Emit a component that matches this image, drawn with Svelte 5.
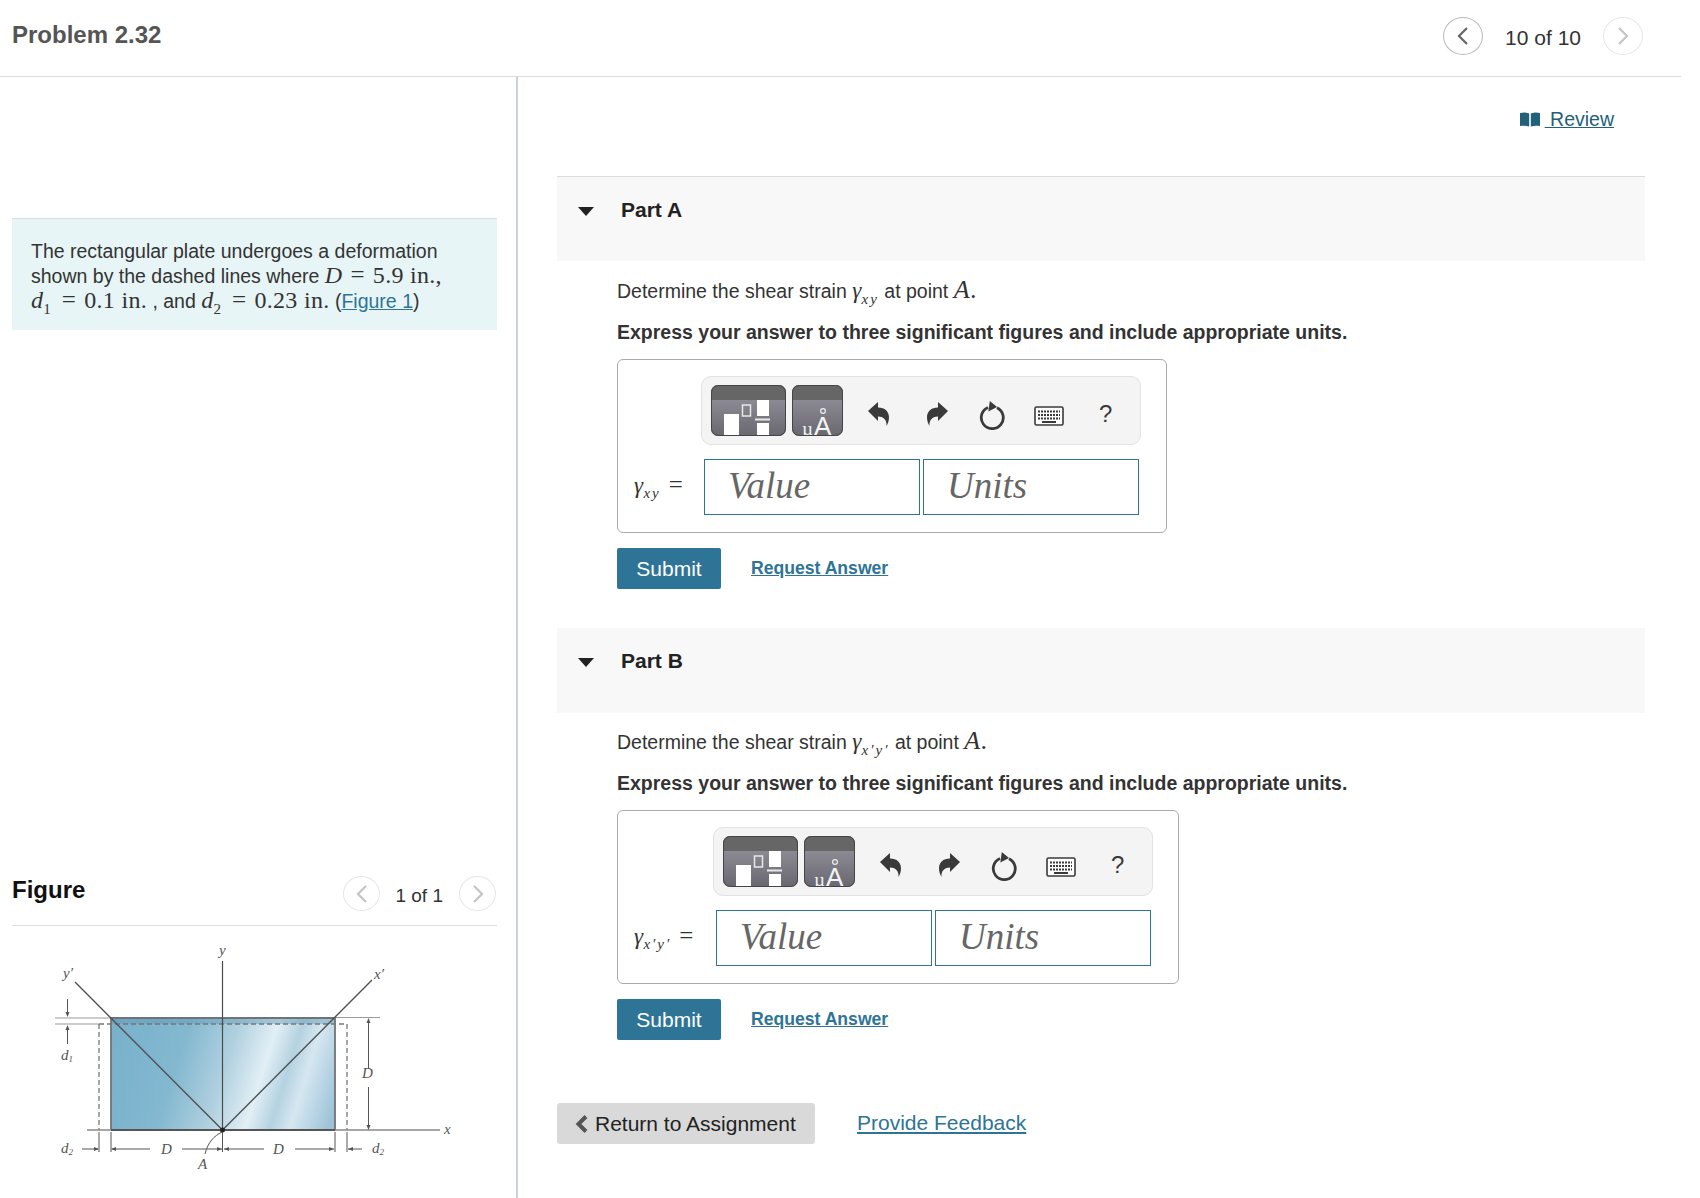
<script lang="ts">
	const parts = [
		{ name: 'Part A', sub: 'xy', cls: 'part-a' },
		{ name: 'Part B', sub: 'x′y′', cls: 'part-b' }
	];
</script>

{#snippet chevron(dir: string, cls: string)}
	<button class="circle {cls}" type="button" aria-label={dir}>
		<svg width="14" height="22" viewBox="0 0 14 22" fill="none">
			<path d={dir === 'prev' ? 'M11 3 3 11l8 8' : 'M3 3l8 8-8 8'} stroke="currentColor" stroke-width="2.2" />
		</svg>
	</button>
{/snippet}

{#snippet toolbar()}
	<div class="toolbar">
		<svg class="tpl" width="75" height="51" viewBox="0 0 75 51">
			<defs>
				<linearGradient id="tplbg" x1="0" y1="0" x2="0" y2="1">
					<stop offset="0" stop-color="#9a99a3" />
					<stop offset="1" stop-color="#696870" />
				</linearGradient>
				<clipPath id="tplclip"><rect width="75" height="51" rx="7" /></clipPath>
			</defs>
			<g clip-path="url(#tplclip)">
				<rect width="75" height="51" fill="url(#tplbg)" />
				<rect width="75" height="15" fill="#666" />
				<rect x="13" y="29" width="15" height="22" fill="#fff" />
				<rect x="31.5" y="20" width="8" height="11" fill="none" stroke="#e8e8e8" stroke-width="1.5" />
				<rect x="46" y="15" width="12" height="16" fill="#fff" />
				<rect x="44" y="33.5" width="15" height="2" fill="#e8e8e8" />
				<rect x="46" y="38" width="12" height="13" fill="#fff" />
			</g>
			<rect x=".5" y=".5" width="74" height="50" rx="7" fill="none" stroke="#444" />
		</svg>
		<svg class="tpl units-btn" width="51" height="51" viewBox="0 0 51 51">
			<defs>
				<clipPath id="uclip"><rect width="51" height="51" rx="7" /></clipPath>
			</defs>
			<g clip-path="url(#uclip)">
				<rect width="51" height="51" fill="url(#tplbg)" />
				<rect width="51" height="15" fill="#666" />
				<circle cx="31" cy="26" r="2.4" fill="none" stroke="#eee" stroke-width="1.2" />
			</g>
			<text x="10" y="50" class="unit-glyph small">µ</text>
			<text x="22" y="50" class="unit-glyph">A</text>
			<rect x=".5" y=".5" width="50" height="50" rx="7" fill="none" stroke="#444" />
		</svg>
		<svg class="tool undo" width="24" height="26" viewBox="0 0 24 26">
			<path d="M1 10 11 1v5.500c7 0 11 4 11 10 0 3-1 6-2.500 8.500 .5-5-2-9.500-8.500-9.500V20Z" fill="#3a3a3a" />
		</svg>
		<svg class="tool redo" width="24" height="26" viewBox="0 0 24 26">
			<path d="M23 10 13 1v5.500c-7 0-11 4-11 10 0 3 1 6 2.500 8.500-.5-5 2-9.500 8.500-9.500V20Z" fill="#3a3a3a" />
		</svg>
		<svg class="tool reset" width="28" height="30" viewBox="0 0 28 30" fill="none">
			<path d="M9 7.500a11 11 0 1 0 9 .2" stroke="#3a3a3a" stroke-width="2.800" />
			<path d="M10 1.500 18 6.500 10 12Z" fill="#3a3a3a" transform="rotate(8 14 7)" />
		</svg>
		<svg class="tool keys" width="30" height="20" viewBox="0 0 30 20">
			<rect x="1" y="1" width="28" height="18" rx="1.500" fill="#fff" stroke="#3a3a3a" stroke-width="1.600" />
			<path d="M4 5.500h22M4 9h22" stroke="#3a3a3a" stroke-width="2" stroke-dasharray="2 1" />
			<path d="M4 12.500h22" stroke="#3a3a3a" stroke-width="2" stroke-dasharray="2 1" />
			<path d="M8 16h14" stroke="#3a3a3a" stroke-width="2" />
		</svg>
		<span class="help">?</span>
	</div>
{/snippet}

<div class="page">
	<header class="top">
		<h1>Problem 2.32</h1>
		<nav class="pager">
			{@render chevron('prev', 'on')}
			<span class="count">10 of 10</span>
			{@render chevron('next', 'off')}
		</nav>
	</header>

	<div class="columns">
		<aside class="left">
			<div class="intro">
				The rectangular plate undergoes a deformation<br />
				shown by the dashed lines where <span class="m"><i>D</i><span class="eq">=</span>5.9 in.,</span><br />
				<span class="m"><i>d</i><sub>1</sub><span class="eq">=</span>0.1 in.</span> , and <span class="m"><i>d</i><sub>2</sub><span class="eq">=</span>0.23 in.</span>
				(<a href="#fig">Figure 1</a>)
			</div>

			<div class="fig-head">
				<h2>Figure</h2>
				<div class="fig-pager">
					{@render chevron('prev', 'off small')}
					<span>1 of 1</span>
					{@render chevron('next', 'off small')}
				</div>
			</div>

			<svg class="figure" width="486" height="265" viewBox="12 933 486 265">
				<defs>
					<linearGradient id="plate" gradientUnits="userSpaceOnUse" x1="111" y1="1040" x2="335" y2="1110">
						<stop offset="0" stop-color="#79b1cb" />
						<stop offset=".3" stop-color="#83b8d0" />
						<stop offset=".5" stop-color="#b0d0df" />
						<stop offset=".66" stop-color="#e2eff5" />
						<stop offset=".76" stop-color="#b4d2e1" />
						<stop offset=".84" stop-color="#d6e7f0" />
						<stop offset="1" stop-color="#9cc3d8" />
					</linearGradient>
				</defs>
				<rect x="111" y="1019" width="224" height="112" fill="url(#plate)" />
				<rect x="111" y="1019" width="224" height="6" fill="#5f9ab8" opacity=".45" />
				<g fill="none" stroke="#6f7478">
					<path d="M111 1019h224M111 1019v112M335 1019v112" stroke-width="1.800" />
					<path d="M55 1019h56M335 1018.500h45M55 1025h44" stroke="#9a9a9a" stroke-width="1.200" />
					<path d="M99 1025h248v106M99 1025v106" stroke="#777" stroke-width="1.300" stroke-dasharray="5 3" />
				</g>
				<path d="M87 1131h353" stroke="#888" stroke-width="1.300" />
				<path d="M111 1131h224" stroke="#555" stroke-width="2" />
				<path d="M222.500 962v169" stroke="#4a4a4a" stroke-width="1.200" />
				<path d="M75 983 222.500 1131 372 981" fill="none" stroke="#4f5254" stroke-width="1.400" />
				<circle cx="222.500" cy="1131" r="2.500" fill="#222" />
				<g stroke="#555" stroke-width="1" fill="none">
					<path d="M67.500 1000v17M67.500 1027v18" />
					<path d="M368.500 1020v50M368.500 1088v42" />
					<path d="M99 1133v20M111 1133v20M222.500 1133v20M335 1133v20M347 1133v20" />
					<path d="M82 1150h16M112 1150h38M182 1150h40M224 1150h40M295 1150h39M348 1150h14" />
					<path d="M222 1133c-8 4-14 10-17 22" />
				</g>
				<g fill="#555">
					<path d="M67.500 1018l-2-5h4ZM67.500 1026l-2 5h4ZM368.500 1019l-2 5h4ZM368.500 1131l-2-5h4Z" />
					<path d="M99 1150l-5-2v4ZM111 1150l5-2v4ZM222 1150l-5-2v4ZM224 1150l5-2v4ZM334 1150l-5-2v4ZM348 1150l5-2v4Z" />
				</g>
				<g class="fig-label">
					<text x="219" y="956">y</text>
					<text x="63" y="979">y′</text>
					<text x="374" y="980">x′</text>
					<text x="61" y="1061">d<tspan class="tiny" dy="2">1</tspan></text>
					<text x="362" y="1079">D</text>
					<text x="444" y="1135">x</text>
					<text x="61" y="1154">d<tspan class="tiny" dy="2">2</tspan></text>
					<text x="161" y="1155">D</text>
					<text x="273" y="1155">D</text>
					<text x="372" y="1154">d<tspan class="tiny" dy="2">2</tspan></text>
					<text x="198" y="1170">A</text>
				</g>
			</svg>
		</aside>

		<main class="right">
			<div class="review-row">
				<a class="review" href="#review">
					<svg width="20" height="15" viewBox="0 0 20 15">
						<path d="M0 1c3-.8 6-.8 9.200 .4v13.100c-3-1-6-1-9.200-.4ZM10.800 1.400C14 .2 17 .2 20 1v13.100c-3-.6-6-.6-9.200 .4Z" fill="#23607a" />
					</svg>
					<span>&nbsp;Review</span>
				</a>
			</div>

			{#each parts as part}
				<section class="part {part.cls}">
					<div class="part-head">
						<span class="caret"></span>
						<h3>{part.name}</h3>
					</div>
					<div class="part-body">
						<p class="ask">
							Determine the shear strain
							<span class="m"><i class="gamma">γ</i><sub><i>{part.sub}</i></sub></span>
							at point <span class="m a"><i>A</i>.</span>
						</p>
						<p class="express">Express your answer to three significant figures and include appropriate units.</p>
						<div class="answer">
							<div class="tool-row">{@render toolbar()}</div>
							<div class="input-row">
								<span class="m label"><i class="gamma">γ</i><sub><i>{part.sub}</i></sub><span class="eq">=</span></span>
								<div class="field">Value</div>
								<div class="field">Units</div>
							</div>
						</div>
						<div class="actions">
							<button class="submit" type="button">Submit</button>
							<a class="request" href="#answer">Request Answer</a>
						</div>
					</div>
				</section>
			{/each}

			<div class="footer">
				<button class="back" type="button">
					<svg width="14" height="20" viewBox="0 0 14 20" fill="none">
						<path d="M11 2.500 3.500 10l7.500 7.500" stroke="#555" stroke-width="4" />
					</svg>
					Return to Assignment
				</button>
				<a class="feedback" href="#feedback">Provide Feedback</a>
			</div>
		</main>
	</div>
</div>

<style>
	:global(body) {
		margin: 0;
		background: #fff;
		font-family: 'Liberation Sans', Arial, sans-serif;
		color: #333;
	}

	.page {
		width: 1681px;
		height: 1198px;
		overflow: hidden;
	}

	.top {
		height: 77px;
		box-sizing: border-box;
		border-bottom: 1px solid #dcdcdc;
		display: flex;
		align-items: center;
		justify-content: space-between;
		padding: 0 38px 7px 12px;
	}

	h1 {
		margin: 0;
		font-size: 24px;
		font-weight: 700;
		color: #555;
	}

	.pager {
		display: flex;
		align-items: center;
		gap: 22px;
		padding-top: 2px;
	}

	.count {
		font-size: 21px;
		padding-top: 4px;
	}

	.circle {
		width: 40px;
		height: 38px;
		padding: 0;
		border-radius: 50%;
		background: #fff;
		display: flex;
		align-items: center;
		justify-content: center;
	}

	.circle.on {
		border: 1px solid #b9b9b9;
		color: #666;
	}

	.circle.off {
		border: 1px solid #e6e6e6;
		color: #c4c4c4;
	}

	.circle.small {
		width: 37px;
		height: 35px;
	}

	.columns {
		display: flex;
		height: 1121px;
	}

	.left {
		width: 518px;
		box-sizing: border-box;
		padding: 141px 19px 0 12px;
		border-right: 2px solid #c9d3dc;
		flex: none;
	}

	.intro {
		height: 112px;
		box-sizing: border-box;
		background: #e7f5f6;
		border-top: 1px solid #d8dfe0;
		padding: 20px 19px 0;
		font-size: 19.5px;
		line-height: 24px;
		white-space: nowrap;
	}

	.m {
		font-family: 'Liberation Serif', 'Times New Roman', serif;
		font-size: 24px;
		letter-spacing: 0.3px;
	}

	.eq {
		margin: 0 8px;
		font-size: 25px;
	}

	.m sub {
		font-size: 15px;
		line-height: 0;
		letter-spacing: 2px;
	}

	.gamma {
		font-family: 'Liberation Serif', serif;
		font-size: 23px;
	}

	.intro .m sub {
		letter-spacing: 3px;
	}

	a {
		color: #2e7497;
	}

	.fig-head {
		margin-top: 542px;
		height: 54px;
		box-sizing: border-box;
		border-bottom: 1px solid #dcdfe2;
		display: flex;
		justify-content: space-between;
		align-items: flex-start;
	}

	h2 {
		margin: 4px 0 0;
		font-size: 24px;
		color: #111;
	}

	.fig-pager {
		display: flex;
		align-items: center;
		gap: 16px;
		font-size: 19px;
		margin: 4px 1px 0 0;
	}

	.fig-pager span {
		padding-top: 5px;
		margin-left: -1px;
	}

	.figure {
		display: block;
		margin-top: 6px;
	}

	.fig-label text {
		font-family: 'Liberation Serif', serif;
		font-style: italic;
		font-size: 15px;
		fill: #555;
	}

	.fig-label .tiny {
		font-size: 9px;
	}

	.right {
		flex: 1;
		padding: 0 36px 0 39px;
	}

	.review-row {
		height: 99px;
		display: flex;
		justify-content: flex-end;
		align-items: flex-start;
		padding: 31px 31px 0 0;
		box-sizing: border-box;
	}

	.review {
		display: flex;
		align-items: center;
		color: #23607a;
		font-size: 19.5px;
	}

	.review svg {
		margin-right: 5px;
	}

	.part-head {
		height: 85px;
		box-sizing: border-box;
		background: #f8f8f8;
		display: flex;
		align-items: flex-start;
		padding: 21px 0 0 21px;
	}

	.part-a .part-head {
		border-top: 1px solid #dcdcdc;
	}

	.caret {
		width: 0;
		height: 0;
		margin-top: 9px;
		border-left: 8px solid transparent;
		border-right: 8px solid transparent;
		border-top: 9px solid #222;
	}

	h3 {
		margin: 0 0 0 27px;
		font-size: 21px;
		line-height: 24px;
		color: #222;
	}

	.part-body {
		box-sizing: border-box;
		padding: 16px 0 0 60px;
		height: 367px;
	}

	.part-b .part-body {
		height: 390px;
		padding-top: 15px;
	}

	.ask {
		margin: 0;
		height: 28px;
		font-size: 19.5px;
		line-height: 26px;
	}

	.a {
		font-size: 26px;
	}

	.express {
		margin: 15px 0 15px;
		font-size: 19.5px;
		line-height: 24px;
		font-weight: 700;
		white-space: nowrap;
	}

	.answer {
		display: inline-block;
		box-sizing: border-box;
		border: 1px solid #aaa;
		border-radius: 6px;
		padding: 16px 27px 17px 16px;
		vertical-align: top;
	}

	.tool-row {
		display: flex;
		justify-content: flex-end;
		margin-right: -2px;
	}

	.toolbar {
		width: 440px;
		height: 69px;
		box-sizing: border-box;
		background: #f4f4f4;
		border: 1px solid #e2e2e2;
		border-radius: 10px;
		display: flex;
		align-items: center;
		padding: 0 0 0 9px;
	}

	.tpl {
		flex: none;
		margin-right: 6px;
	}

	.units-btn {
		overflow: visible;
	}

	.tool {
		flex: none;
		margin-top: 6px;
	}

	.undo {
		margin-left: 18px;
		margin-right: 34px;
	}

	.redo {
		margin-right: 30px;
	}

	.reset {
		margin-right: 27px;
		margin-top: 8px;
	}

	.keys {
		margin-right: 35px;
		margin-top: 10px;
	}

	.unit-glyph {
		font-family: 'Liberation Sans', sans-serif;
		font-size: 26px;
		fill: #f4f4f4;
	}

	.unit-glyph.small {
		font-family: 'Liberation Serif', serif;
		font-size: 19px;
	}

	.help {
		font-size: 24px;
		color: #3a3a3a;
		margin-top: 6px;
	}

	.input-row {
		display: flex;
		align-items: center;
		margin-top: 14px;
	}

	.label {
		flex: 1;
		white-space: nowrap;
		font-size: 22px;
		margin-top: -4px;
	}

	.field {
		width: 216px;
		height: 56px;
		box-sizing: border-box;
		border: 1px solid #2e7497;
		padding: 0 0 3px 23px;
		font-family: 'Liberation Serif', serif;
		font-style: italic;
		font-size: 37px;
		line-height: 52px;
		color: #666;
	}

	.field + .field {
		margin-left: 3px;
	}

	.part-a .answer {
		width: 550px;
	}

	.part-b .answer {
		width: 562px;
	}

	.actions {
		margin-top: 15px;
		display: flex;
		align-items: center;
		gap: 30px;
	}

	.submit {
		width: 104px;
		height: 41px;
		border: none;
		border-radius: 2px;
		background: #2e7497;
		color: #fff;
		font-family: inherit;
		font-size: 21px;
	}

	.request {
		font-size: 17.6px;
		font-weight: 700;
	}

	.footer {
		display: flex;
		align-items: center;
		gap: 42px;
	}

	.back {
		width: 258px;
		height: 41px;
		border: none;
		border-radius: 3px;
		background: #d9d9d9;
		color: #222;
		font-family: inherit;
		font-size: 21px;
		display: flex;
		align-items: center;
		gap: 6px;
		padding: 0 0 0 18px;
	}

	.feedback {
		font-size: 21px;
		margin-bottom: 2px;
	}
</style>
